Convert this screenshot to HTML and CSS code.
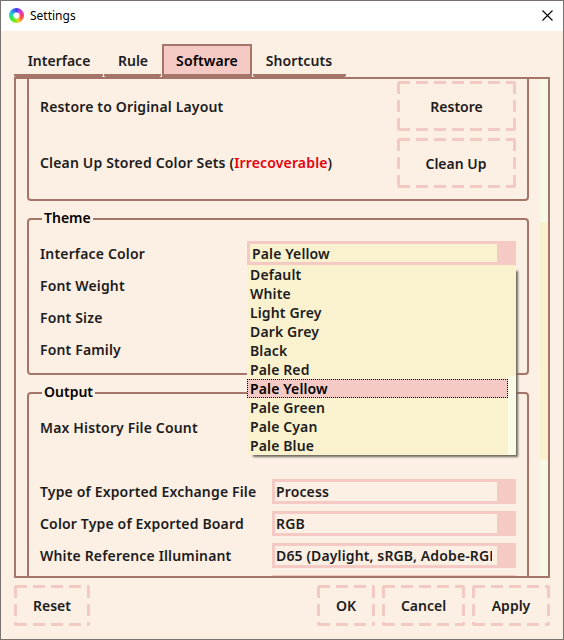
FILE: index.html
```html
<!DOCTYPE html>
<html lang="en">
<head>
<meta charset="utf-8">
<title>Settings</title>
<link rel="stylesheet" href="styles.css">
</head>
<body>
<div class="window">
  <header class="titlebar">
    <span class="logo"></span>
    <span class="title">Settings</span>
    <svg class="close" width="11" height="11" viewBox="0 0 11 11"><path d="M.5 .5l10 10M10.5 .5l-10 10" stroke="#000" stroke-width="1.1" fill="none"/></svg>
  </header>
  <nav class="tabs">
    <div class="tab t-interface">Interface</div>
    <div class="tab t-rule">Rule</div>
    <div class="tab t-software active">Software</div>
    <div class="tab t-shortcuts">Shortcuts</div>
  </nav>
  <main class="panel">
    <div class="content">
      <section class="group first">
        <div class="row tall"><span>Restore to Original Layout</span><div class="btn big">Restore</div></div>
        <div class="row tall"><span>Clean Up Stored Color Sets (<b class="warn">Irrecoverable</b>)</span><div class="btn big">Clean Up</div></div>
      </section>
      <section class="group theme">
        <h2 class="legend">Theme</h2>
        <div class="row"><span>Interface Color</span>
          <div class="combo wide open"><div class="value">Pale Yellow</div>
            <div class="menu">
              <div class="item">Default</div>
              <div class="item">White</div>
              <div class="item">Light Grey</div>
              <div class="item">Dark Grey</div>
              <div class="item">Black</div>
              <div class="item">Pale Red</div>
              <div class="item selected">Pale Yellow</div>
              <div class="item">Pale Green</div>
              <div class="item">Pale Cyan</div>
              <div class="item">Pale Blue</div>
              <div class="menu-track"></div>
            </div>
          </div>
        </div>
        <div class="row"><span>Font Weight</span></div>
        <div class="row"><span>Font Size</span></div>
        <div class="row"><span>Font Family</span></div>
      </section>
      <section class="group output">
        <h2 class="legend">Output</h2>
        <div class="row count"><span>Max History File Count</span></div>
        <div class="row"><span>Type of Exported Exchange File</span><div class="combo"><div class="value">Process</div></div></div>
        <div class="row"><span>Color Type of Exported Board</span><div class="combo"><div class="value">RGB</div></div></div>
        <div class="row"><span>White Reference Illuminant</span><div class="combo"><div class="value"><span class="clip">D65 (Daylight, sRGB, Adobe-RGB)</span></div></div></div>
        <div class="row"><span></span><div class="combo"><div class="value"></div></div></div>
      </section>
    </div>
    <div class="scrollbar"><div class="thumb"></div></div>
  </main>
  <footer class="actions">
    <div class="btn reset">Reset</div>
    <div class="btn ok">OK</div>
    <div class="btn cancel">Cancel</div>
    <div class="btn apply">Apply</div>
  </footer>
</div>
</body>
</html>
```
FILE: styles.css
```css
* { box-sizing: border-box; }
body {
  --line: #a67569;
  --pink: #f6cac4;
  --bg: #fcefe3;
  --yellow: #faf2cf;
  margin: 0;
  width: 564px;
  height: 640px;
  padding: 1px;
  background: #77716f;
  font: 600 14px/19px "Noto Sans", sans-serif;
  color: #1c1c1c;
  overflow: hidden;
  white-space: nowrap;
}
.window { width: 562px; height: 638px; background: var(--bg); display: flex; flex-direction: column; }
.titlebar { height: 30px; background: #fff; display: flex; align-items: center; padding: 0 10px 2px 8px; flex: none; }
.logo {
  width: 15px; height: 15px; border-radius: 50%;
  background: radial-gradient(circle, #fff 0 2.2px, transparent 4px),
    conic-gradient(#453bea, #d23ae0 45deg, #ee3f80 80deg, #fb5d3a 120deg, #f2d426 160deg, #86e820 190deg, #2bea45 245deg, #25c9dd 290deg, #3180ef 325deg, #453bea);
}
.title { font: 400 12px/16px "Noto Sans", sans-serif; color: #000; margin-left: 6px; padding-top: 2px; flex: 1; }
.tabs { display: flex; height: 46px; padding: 13px 0 0 13px; flex: none; }
.tab { height: 33px; text-align: center; line-height: 33px; border-bottom: 3px solid var(--line); border-radius: 2px; }
.t-interface { width: 89px; margin-right: 1px; padding-left: 1px; }
.t-rule { width: 57px; margin-right: 1px; padding-left: 1px; }
.t-software { width: 90px; }
.t-shortcuts { width: 93px; margin-left: 1px; padding-right: 1px; letter-spacing: .1px; }
.tab.active { background: var(--pink); border: 2px solid var(--line); border-bottom-width: 3px; line-height: 29px; color: #000; border-radius: 0; letter-spacing: .1px; }
.panel { height: 501px; margin: 0 13px; border: 2px solid var(--line); display: flex; overflow: hidden; flex: none; }
.content { width: 524px; padding: 0 11px; }
.group { border: 2px solid var(--line); border-radius: 4px; padding: 0 11px; }
.group.first { height: 122px; border-top: 0; border-radius: 0 0 4px 4px; margin-bottom: 17px; }
.group.theme { height: 157px; padding-top: 18px; margin-bottom: 17px; }
.group.output { height: 210px; padding-top: 18px; }
.legend { font: inherit; color: #000; background: var(--bg); width: max-content; margin: -30px 0 10px 2px; padding: 0 2px; height: 19px; }
.row { height: 32px; display: flex; align-items: center; justify-content: space-between; }
.row > span { letter-spacing: .16px; }
.row.tall { height: 56px; }
.first .row:first-child { height: 55px; }
.first .row.tall + .row.tall { height: 57px; }
.first .row:first-child .btn { margin-bottom: 1px; padding-top: 1px; }
.first .row.tall + .row.tall .btn { padding: 1px 1px 0 0; }
.row.count { height: 64px; align-items: flex-start; padding-top: 7px; }
.warn { color: #e8000c; font-weight: inherit; }
.btn {
  display: flex; align-items: center; justify-content: center; border-radius: 2px; height: 41px;
  --dash-x: linear-gradient(90deg, #f3cac3 12px, transparent 12px);
  --dash-y: linear-gradient(#f3cac3 12px, transparent 12px);
  background: var(--dash-x) 1px 0 / 18px 3px repeat-x, var(--dash-x) 1px 100% / 18px 3px repeat-x,
    var(--dash-y) 0 1px / 3px 18px repeat-y, var(--dash-y) 100% 1px / 3px 18px repeat-y;
}
.btn.big { width: 119px; height: 50px; }
.combo { width: 244px; height: 25px; background: var(--pink); padding: 3px 19px 3px 3px; position: relative; }
.combo.wide { width: 269px; height: 24px; }
.value { background: var(--bg); height: 100%; padding-left: 1px; letter-spacing: .13px; }
.open .value { background: var(--yellow); line-height: 20px; padding-left: 2px; }
.clip { display: block; width: 216px; overflow: hidden; }
.menu { position: absolute; left: 0; top: 24px; width: 269px; height: 190px; background: var(--yellow); box-shadow: 4px 4px 2px -2px #6e6960; z-index: 2; letter-spacing: .13px; }
.item { height: 19px; padding-left: 3px; width: 261px; }
.item.selected { background: var(--pink); color: #000; outline: 1px dotted #000; outline-offset: -1px; }
.menu-track { position: absolute; right: 0; bottom: 0; width: 8px; height: 79px; background: repeating-conic-gradient(#ffffef 0 25%, #f5f8df 0 50%) 0 0 / 2px 2px; }
.scrollbar { width: 8px; background: repeating-conic-gradient(#ffffef 0 25%, #f0f5dc 0 50%) 0 0 / 2px 2px; padding-top: 143px; }
.thumb { height: 238px; background: var(--yellow); }
.actions { display: flex; gap: 7px; padding: 7px 13px 0; }
.reset { width: 76px; margin-right: auto; }
.ok { width: 58px; }
.cancel { width: 83px; }
.apply { width: 78px; }
```
